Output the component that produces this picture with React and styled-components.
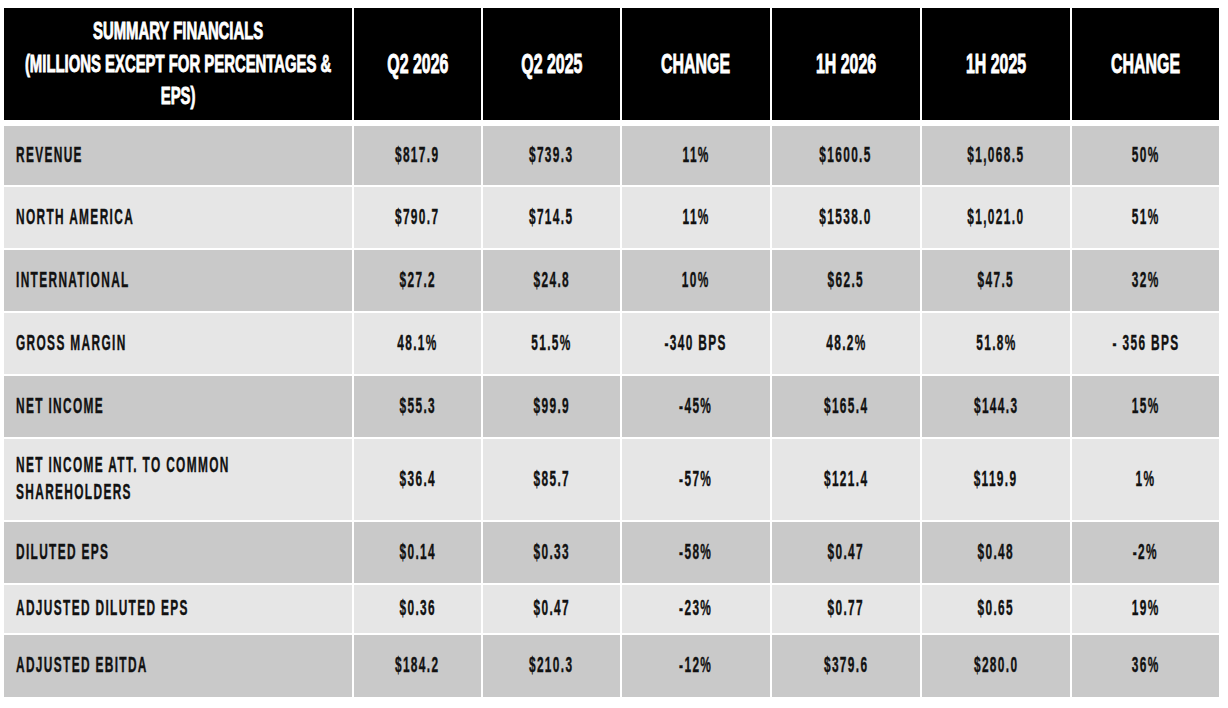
import React from "react";
import styled, { createGlobalStyle } from "styled-components";

const Global = createGlobalStyle`
  html, body { margin: 0; padding: 0; background: #ffffff; }
  body { font-family: "Liberation Sans", Arial, sans-serif; }
`;

const COLS = "348px 127px 137px 148px 148px 148px 147px";

const Page = styled.div`
  width: 1228px;
  height: 708px;
  box-sizing: border-box;
  padding: 8px 0 0 4px;
  background: #ffffff;
`;

const Table = styled.div`
  display: flex;
  flex-direction: column;
  gap: 2px;
  width: 1215px;
`;

const HeaderRow = styled.div`
  display: grid;
  grid-template-columns: ${COLS};
  column-gap: 2px;
  height: 112px;
  margin-bottom: 4px;
`;

const HeadCell = styled.div`
  background: #000000;
  color: #ffffff;
  display: flex;
  align-items: center;
  justify-content: center;
  overflow: hidden;
`;

const HeadText = styled.span`
  display: inline-block;
  white-space: nowrap;
  text-align: center;
  font-family: "Liberation Sans", Arial, sans-serif;
  font-weight: 700;
  font-size: ${(p) => (p.$title ? "24px" : "27px")};
  line-height: ${(p) => (p.$title ? "32.5px" : "32px")};
  transform: scaleX(${(p) => (p.$title ? 0.62 : 0.59)});
  transform-origin: center;
  -webkit-text-stroke: 0.9px #ffffff;
`;

const Row = styled.div`
  display: grid;
  grid-template-columns: ${COLS};
  column-gap: 2px;
  height: ${(p) => p.$h}px;
`;

const Cell = styled.div`
  background: ${(p) => (p.$dark ? "#c9c9c9" : "#e6e6e6")};
  color: #111111;
  display: flex;
  align-items: center;
  justify-content: ${(p) => (p.$label ? "flex-start" : "center")};
  padding: 0 0 3px ${(p) => (p.$label ? "12px" : "0")};
  overflow: hidden;
`;

const BodyText = styled.span`
  display: inline-block;
  white-space: nowrap;
  font-family: "Liberation Sans", Arial, sans-serif;
  font-weight: 700;
  font-size: 22px;
  line-height: 27px;
  letter-spacing: 2.5px;
  transform: scaleX(0.54);
  transform-origin: ${(p) => (p.$label ? "left center" : "center")};
  -webkit-text-stroke: 0.4px #111111;
`;

const headers = ["Q2 2026", "Q2 2025", "CHANGE", "1H 2026", "1H 2025", "CHANGE"];

const rows = [
  { label: ["REVENUE"], vals: ["$817.9", "$739.3", "11%", "$1600.5", "$1,068.5", "50%"], h: 59 },
  { label: ["NORTH AMERICA"], vals: ["$790.7", "$714.5", "11%", "$1538.0", "$1,021.0", "51%"], h: 61 },
  { label: ["INTERNATIONAL"], vals: ["$27.2", "$24.8", "10%", "$62.5", "$47.5", "32%"], h: 61 },
  { label: ["GROSS MARGIN"], vals: ["48.1%", "51.5%", "-340 BPS", "48.2%", "51.8%", "- 356 BPS"], h: 61 },
  { label: ["NET INCOME"], vals: ["$55.3", "$99.9", "-45%", "$165.4", "$144.3", "15%"], h: 61 },
  { label: ["NET INCOME ATT. TO COMMON", "SHAREHOLDERS"], vals: ["$36.4", "$85.7", "-57%", "$121.4", "$119.9", "1%"], h: 81 },
  { label: ["DILUTED EPS"], vals: ["$0.14", "$0.33", "-58%", "$0.47", "$0.48", "-2%"], h: 61 },
  { label: ["ADJUSTED DILUTED EPS"], vals: ["$0.36", "$0.47", "-23%", "$0.77", "$0.65", "19%"], h: 48 },
  { label: ["ADJUSTED EBITDA"], vals: ["$184.2", "$210.3", "-12%", "$379.6", "$280.0", "36%"], h: 62 },
];

const Lines = ({ lines }) =>
  lines.map((l, i) => (
    <React.Fragment key={i}>
      {i > 0 && <br />}
      {l}
    </React.Fragment>
  ));

export default function App() {
  return (
    <>
      <Global />
      <Page>
        <Table>
          <HeaderRow>
            <HeadCell>
              <HeadText $title>
                <Lines lines={["SUMMARY FINANCIALS", "(MILLIONS EXCEPT FOR PERCENTAGES &", "EPS)"]} />
              </HeadText>
            </HeadCell>
            {headers.map((h, i) => (
              <HeadCell key={i}>
                <HeadText>{h}</HeadText>
              </HeadCell>
            ))}
          </HeaderRow>
          {rows.map((r, ri) => (
            <Row key={ri} $h={r.h}>
              <Cell $label $dark={ri % 2 === 0}>
                <BodyText $label>
                  <Lines lines={r.label} />
                </BodyText>
              </Cell>
              {r.vals.map((v, vi) => (
                <Cell key={vi} $dark={ri % 2 === 0}>
                  <BodyText>{v}</BodyText>
                </Cell>
              ))}
            </Row>
          ))}
        </Table>
      </Page>
    </>
  );
}
